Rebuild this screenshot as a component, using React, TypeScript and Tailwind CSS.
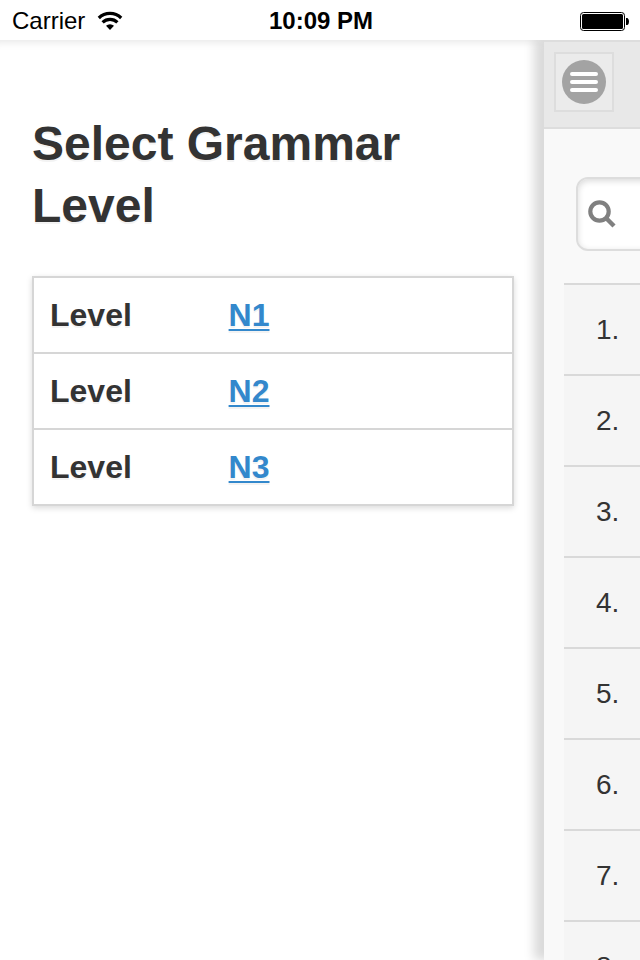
import { useState } from "react";

const levels = ["N1", "N2", "N3"];
const grammarPoints = [1, 2, 3, 4, 5, 6, 7, 8];

function WifiIcon() {
  return (
    <svg width="26" height="20" viewBox="0 0 26 20" fill="none" stroke="#000" strokeWidth="3.2" aria-hidden="true">
      <path d="M1.800 7a16 16 0 0 1 22.400 0" />
      <path d="M5.600 11.400a10.600 10.600 0 0 1 14.800 0" />
      <path d="M13 19l-4-4.200a6 6 0 0 1 8 0z" fill="#000" stroke="none" />
    </svg>
  );
}

function BatteryIcon() {
  return (
    <svg width="50" height="20" viewBox="0 0 50 20" aria-hidden="true">
      <rect x="0.5" y="1.5" width="44" height="18" rx="3" fill="#fff" stroke="#000" />
      <rect x="2" y="3" width="41" height="15" rx="1.5" fill="#000" />
      <path d="M46 7h1.500q1.500 1 1.500 3.500t-1.500 3.500h-1.500z" fill="#000" />
    </svg>
  );
}

function StatusBar() {
  return (
    <header className="relative z-10 grid h-10 shrink-0 grid-cols-3 items-center bg-white pt-px pr-2.5 pl-3 text-2xl text-black">
      <div className="flex items-center gap-3">
        <span>Carrier</span>
        <WifiIcon />
      </div>
      <time className="text-center font-bold">10:09 PM</time>
      <div className="flex justify-end">
        <BatteryIcon />
      </div>
    </header>
  );
}

export default function App() {
  const [query, setQuery] = useState("");

  return (
    <div className="flex h-screen flex-col overflow-hidden bg-white font-['Liberation_Sans',Arial,sans-serif] text-[#333]">
      <StatusBar />

      <div className="flex min-h-0 flex-1">
        {/* Level panel */}
        <main className="min-w-0 flex-1 pt-[73px] pr-[30px] pl-8 shadow-[inset_0_10px_8px_-8px_rgba(0,0,0,0.1)] [text-shadow:0_2px_0_#f3f3f3]">
          <h1 className="text-5xl leading-[62px] font-bold">Select Grammar Level</h1>
          <table className="mt-[39px] w-full border-collapse border-2 border-[#d6d6d6] bg-white text-[32px] leading-[42px] font-bold shadow-[0_2px_6px_rgba(0,0,0,0.15)]">
            <tbody>
              {levels.map((level) => (
                <tr key={level} className="border-b-2 border-[#d6d6d6]">
                  <th scope="row" className="w-[37%] py-4 pl-4 text-left">
                    Level
                  </th>
                  <td className="py-4 pl-[18px]">
                    <a href={`#${level}`} className="text-[#3388cc] underline decoration-2 underline-offset-3">
                      {level}
                    </a>
                  </td>
                </tr>
              ))}
            </tbody>
          </table>
        </main>

        {/* Page pushed aside while the panel is open */}
        <aside className="flex w-[15%] flex-col bg-[#f9f9f9] shadow-[-10px_0_10px_rgba(0,0,0,0.15)]">
          <div className="border-y-2 border-[#dddddd] bg-[#e8e8e8] px-2.5 pt-2.5 pb-[15px]">
            <button
              type="button"
              aria-label="Menu"
              className="flex size-15 items-center justify-center border-2 border-[#dddddd] bg-[#ebebeb]"
            >
              <svg width="44" height="44" viewBox="0 0 44 44" className="shrink-0" aria-hidden="true">
                <circle cx="22" cy="22" r="22" fill="#a3a3a3" />
                <path d="M10 14h24M10 22h24M10 30h24" stroke="#fff" strokeWidth="4" strokeLinecap="round" />
              </svg>
            </button>
          </div>

          <div className="mt-12 -mr-8 ml-8 flex h-[74px] shrink-0 items-center rounded-xl border-2 border-[#dddddd] bg-white pl-2.5 shadow-[inset_0_2px_6px_rgba(0,0,0,0.15)]">
            <svg width="28" height="28" viewBox="0 0 28 28" fill="none" stroke="#808080" className="shrink-0" aria-hidden="true">
              <circle cx="11.500" cy="11.500" r="9.200" strokeWidth="4.200" />
              <path d="M17.500 17.500l8.500 8.500" strokeWidth="4.400" />
            </svg>
            <input
              type="search"
              aria-label="Search grammar"
              value={query}
              onChange={(e) => setQuery(e.target.value)}
              className="h-full min-w-0 flex-1 bg-transparent pl-3 text-[28px] outline-none"
            />
          </div>

          <ul className="mt-8 ml-5 bg-[#f5f5f5] text-[28px] leading-[89px]">
            {grammarPoints.map((n) => (
              <li key={n} className="border-t-2 border-[#d9d9d9] pl-8">
                {n}.
              </li>
            ))}
          </ul>
        </aside>
      </div>
    </div>
  );
}
